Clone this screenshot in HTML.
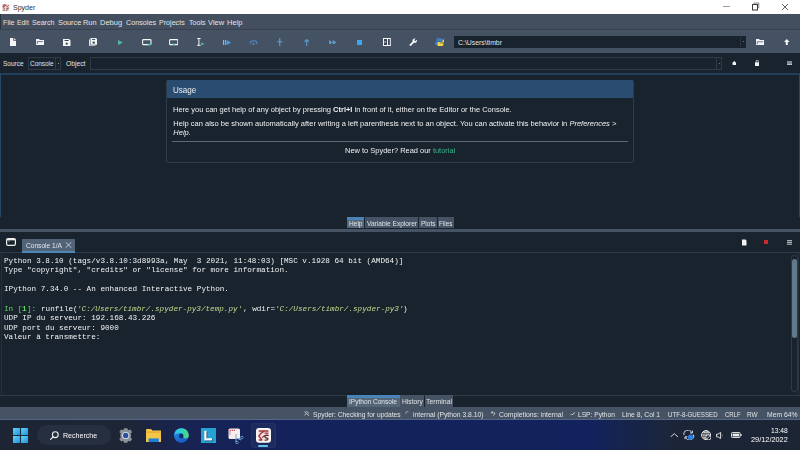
<!DOCTYPE html>
<html><head><meta charset="utf-8">
<style>
*{margin:0;padding:0;box-sizing:border-box}
html,body{width:800px;height:450px;overflow:hidden;background:#19232D;font-family:"Liberation Sans",sans-serif;position:relative}
.a{position:absolute}
.t{position:absolute;white-space:pre;line-height:1}

</style></head><body><div id="root" style="position:absolute;left:0;top:0;width:800px;height:450px;overflow:hidden;filter:blur(0.3px)">
<div class="a" style="left:0px;top:0px;width:800px;height:14px;background:#ffffff;"></div>
<svg class="a" style="left:2px;top:3.5px" width="7.6" height="7" viewBox="0 0 7.6 7">
<rect x="0" y="0" width="7.6" height="7" fill="#f0dcdc"/>
<path d="M0.8 1.2 L3.4 0.6 M0.6 2.4 L4.6 1.2 M3.2 2 L1 3.6 L3 5.2 M0.8 6.2 L2.8 6.4 M4.4 3.2 L6.8 1.4 M4.2 5 L6.4 3.6" stroke="#8f3434" stroke-width="0.8" fill="none"/>
<path d="M6.8 4.4 Q4.6 4.6 5 5.6 Q5.6 6.6 3.8 6.6" stroke="#5a4040" stroke-width="0.7" fill="none"/>
</svg>
<div class="t" style="left:13px;top:3.50px;font-family:'Liberation Sans', sans-serif;font-size:8.0px;color:#303030;font-weight:normal;font-style:normal;transform:scaleX(0.8794);transform-origin:0 0;">Spyder</div>
<div class="a" style="left:723px;top:6px;width:7px;height:1px;background:#9a9a9a;"></div>
<svg class="a" style="left:751px;top:2px" width="9" height="9" viewBox="0 0 9 9">
<rect x="1.5" y="2.5" width="5" height="5.5" fill="none" stroke="#3a3a3a" stroke-width="1"/>
<path d="M3 2 V1 H7.8 V5.8 H7" fill="none" stroke="#6a6a6a" stroke-width="0.8"/></svg>
<svg class="a" style="left:781px;top:3px" width="8" height="8" viewBox="0 0 8 8">
<path d="M1 1 L7 7 M7 1 L1 7" stroke="#444" stroke-width="0.8"/></svg>
<div class="a" style="left:0px;top:14px;width:800px;height:16px;background:#434e5f;"></div>
<div class="a" style="left:0px;top:14px;width:1px;height:16px;background:#2a3340;"></div>
<div class="a" style="left:0px;top:29px;width:800px;height:1px;background:#37414F;"></div>
<div class="t" style="left:2.6px;top:19.17px;font-family:'Liberation Sans', sans-serif;font-size:7.8px;color:#e2e4e7;font-weight:normal;font-style:normal;transform:scaleX(0.9222);transform-origin:0 0;">File</div>
<div class="t" style="left:16.8px;top:19.17px;font-family:'Liberation Sans', sans-serif;font-size:7.8px;color:#e2e4e7;font-weight:normal;font-style:normal;transform:scaleX(0.8781);transform-origin:0 0;">Edit</div>
<div class="t" style="left:32.4px;top:19.17px;font-family:'Liberation Sans', sans-serif;font-size:7.8px;color:#e2e4e7;font-weight:normal;font-style:normal;transform:scaleX(0.9062);transform-origin:0 0;">Search</div>
<div class="t" style="left:57.6px;top:19.17px;font-family:'Liberation Sans', sans-serif;font-size:7.8px;color:#e2e4e7;font-weight:normal;font-style:normal;transform:scaleX(0.9426);transform-origin:0 0;">Source</div>
<div class="t" style="left:83.39999999999999px;top:19.17px;font-family:'Liberation Sans', sans-serif;font-size:7.8px;color:#e2e4e7;font-weight:normal;font-style:normal;transform:scaleX(0.9432);transform-origin:0 0;">Run</div>
<div class="t" style="left:99.8px;top:19.17px;font-family:'Liberation Sans', sans-serif;font-size:7.8px;color:#e2e4e7;font-weight:normal;font-style:normal;transform:scaleX(0.9615);transform-origin:0 0;">Debug</div>
<div class="t" style="left:125.8px;top:19.17px;font-family:'Liberation Sans', sans-serif;font-size:7.8px;color:#e2e4e7;font-weight:normal;font-style:normal;transform:scaleX(0.9226);transform-origin:0 0;">Consoles</div>
<div class="t" style="left:159.4px;top:19.17px;font-family:'Liberation Sans', sans-serif;font-size:7.8px;color:#e2e4e7;font-weight:normal;font-style:normal;transform:scaleX(0.9123);transform-origin:0 0;">Projects</div>
<div class="t" style="left:188.7px;top:19.17px;font-family:'Liberation Sans', sans-serif;font-size:7.8px;color:#e2e4e7;font-weight:normal;font-style:normal;transform:scaleX(0.9119);transform-origin:0 0;">Tools</div>
<div class="t" style="left:208.2px;top:19.17px;font-family:'Liberation Sans', sans-serif;font-size:7.8px;color:#e2e4e7;font-weight:normal;font-style:normal;transform:scaleX(0.9663);transform-origin:0 0;">View</div>
<div class="t" style="left:227.2px;top:19.17px;font-family:'Liberation Sans', sans-serif;font-size:7.8px;color:#e2e4e7;font-weight:normal;font-style:normal;transform:scaleX(0.9659);transform-origin:0 0;">Help</div>
<div class="a" style="left:0px;top:30px;width:800px;height:23px;background:#455264;"></div>
<div class="a" style="left:454px;top:36px;width:292px;height:12px;background:#19232D;"></div>
<div class="a" style="left:740px;top:37px;width:1px;height:10px;background:#2a3541;"></div>
<div class="a" style="left:743px;top:41px;width:1.2px;height:1.2px;background:#6a7683;"></div>
<div class="t" style="left:457.5px;top:39.17px;font-family:'Liberation Sans', sans-serif;font-size:7.8px;color:#e2e4e7;font-weight:normal;font-style:normal;transform:scaleX(0.8830);transform-origin:0 0;">C:\Users\timbr</div>
<div class="a" style="left:0px;top:53px;width:800px;height:20px;background:#19232D;"></div>
<div class="t" style="left:2.5px;top:60.47px;font-family:'Liberation Sans', sans-serif;font-size:7.8px;color:#e2e4e7;font-weight:normal;font-style:normal;transform:scaleX(0.8293);transform-origin:0 0;">Source</div>
<div class="a" style="left:28px;top:57px;width:33px;height:13px;background:transparent;border:1px solid #2f3a46"></div>
<div class="a" style="left:55px;top:58px;width:1px;height:11px;background:#2f3a46;"></div>
<div class="a" style="left:57.5px;top:63px;width:1px;height:1px;background:#8899aa;"></div>
<div class="t" style="left:29.8px;top:60.47px;font-family:'Liberation Sans', sans-serif;font-size:7.8px;color:#e2e4e7;font-weight:normal;font-style:normal;transform:scaleX(0.8214);transform-origin:0 0;">Console</div>
<div class="t" style="left:65.8px;top:60.47px;font-family:'Liberation Sans', sans-serif;font-size:7.8px;color:#e2e4e7;font-weight:normal;font-style:normal;transform:scaleX(0.8649);transform-origin:0 0;">Object</div>
<div class="a" style="left:90px;top:57px;width:632px;height:13px;background:transparent;border:1px solid #2f3a46"></div>
<div class="a" style="left:716px;top:58px;width:1px;height:11px;background:#2f3a46;"></div>
<div class="a" style="left:718.5px;top:63px;width:1px;height:1px;background:#6a7683;"></div>
<div class="a" style="left:0px;top:73px;width:800px;height:145px;background:transparent;border:1px solid #294866;border-top:2px solid #223f5c;border-bottom:1px solid #37414F"></div>
<div class="a" style="left:166px;top:80px;width:468px;height:83px;background:transparent;border:1px solid #2e3d4a;border-radius:2px"></div>
<div class="a" style="left:167px;top:80px;width:466px;height:18px;background:#294c70;"></div>
<div class="t" style="left:173.3px;top:85.79px;font-family:'Liberation Sans', sans-serif;font-size:8.6px;color:#eceef0;font-weight:normal;font-style:normal;transform:scaleX(0.9379);transform-origin:0 0;">Usage</div>
<div class="t" style="left:173.3px;top:105.62px;font-family:'Liberation Sans', sans-serif;font-size:7.5px;color:#eef0f2;font-weight:normal;font-style:normal;transform:scaleX(0.9974);transform-origin:0 0;">Here you can get help of any object by pressing <b>Ctrl+I</b> in front of it, either on the Editor or the Console.</div>
<div class="t" style="left:173.3px;top:120.03px;font-family:'Liberation Sans', sans-serif;font-size:7.5px;color:#eef0f2;font-weight:normal;font-style:normal;transform:scaleX(1.0000);transform-origin:0 0;">Help can also be shown automatically after writing a left parenthesis next to an object. You can activate this behavior in <i>Preferences &gt;</i></div>
<div class="t" style="left:173.3px;top:129.03px;font-family:'Liberation Sans', sans-serif;font-size:7.5px;color:#eef0f2;font-weight:normal;font-style:italic;">Help.</div>
<div class="a" style="left:172px;top:141px;width:456px;height:1px;background:#5b6a78;"></div>
<div class="t" style="left:344.8px;top:147.38px;font-family:'Liberation Sans', sans-serif;font-size:7.5px;color:#eef0f2;font-weight:normal;font-style:normal;transform:scaleX(0.9945);transform-origin:0 0;">New to Spyder? Read our <span style="color:#38b58b">tutorial</span></div>
<div class="a" style="left:0px;top:217px;width:800px;height:11px;background:#19232D;"></div>
<div class="a" style="left:347px;top:217px;width:17.30000000000001px;height:11px;background:#54687A;"></div>
<div class="a" style="left:347px;top:217px;width:17.30000000000001px;height:2.5px;background:#4a83ba;"></div>
<div class="t" style="left:348.9px;top:219.71px;font-family:'Liberation Sans', sans-serif;font-size:7.4px;color:#e2e4e7;font-weight:normal;font-style:normal;transform:scaleX(0.8880);transform-origin:0 0;">Help</div>
<div class="a" style="left:365.4px;top:217px;width:52.60000000000002px;height:11px;background:#455364;"></div>
<div class="t" style="left:366.5px;top:219.71px;font-family:'Liberation Sans', sans-serif;font-size:7.4px;color:#e2e4e7;font-weight:normal;font-style:normal;transform:scaleX(0.8906);transform-origin:0 0;">Variable Explorer</div>
<div class="a" style="left:419px;top:217px;width:17.69999999999999px;height:11px;background:#455364;"></div>
<div class="t" style="left:420.5px;top:219.71px;font-family:'Liberation Sans', sans-serif;font-size:7.4px;color:#e2e4e7;font-weight:normal;font-style:normal;transform:scaleX(0.8821);transform-origin:0 0;">Plots</div>
<div class="a" style="left:437.8px;top:217px;width:16.19999999999999px;height:11px;background:#455364;"></div>
<div class="t" style="left:439.3px;top:219.71px;font-family:'Liberation Sans', sans-serif;font-size:7.4px;color:#e2e4e7;font-weight:normal;font-style:normal;transform:scaleX(0.8649);transform-origin:0 0;">Files</div>
<div class="a" style="left:0px;top:229px;width:800px;height:3px;background:#455364;"></div>
<div class="a" style="left:0px;top:232px;width:800px;height:21px;background:#19232D;"></div>
<div class="a" style="left:0px;top:252px;width:800px;height:1px;background:#2c3946;"></div>
<svg class="a" style="left:6px;top:238px" width="10" height="8" viewBox="0 0 10 8">
<rect x="0.6" y="0.6" width="8.8" height="6.8" rx="1.4" fill="none" stroke="#eeeeee" stroke-width="1.2"/>
<rect x="1" y="1" width="8" height="1.3" fill="#eeeeee"/><rect x="1.8" y="2.6" width="2" height="0.9" fill="#9aa0a8"/></svg>
<div class="a" style="left:22px;top:238.5px;width:53px;height:14.5px;background:#516377;"></div>
<div class="a" style="left:22px;top:250.5px;width:53px;height:2.5px;background:#4f86b8;"></div>
<div class="t" style="left:26px;top:241.51px;font-family:'Liberation Sans', sans-serif;font-size:7.4px;color:#e2e4e7;font-weight:normal;font-style:normal;transform:scaleX(0.8941);transform-origin:0 0;">Console 1/A</div>
<svg class="a" style="left:65px;top:242px" width="7" height="6" viewBox="0 0 7 6">
<path d="M0.6 0.2 L6.4 5.8 M6.4 0.2 L0.6 5.8" stroke="#dfe1e3" stroke-width="0.8"/></svg>
<svg class="a" style="left:741px;top:239px" width="6" height="7" viewBox="0 0 6 7">
<path d="M1 0.5 H4.5 L5.5 1.8 V6.5 H1 Z" fill="#f2f2f2"/></svg>
<div class="a" style="left:764px;top:240px;width:4.3px;height:4.3px;background:#c62c2c;"></div>
<svg class="a" style="left:787px;top:239.5px" width="5" height="5" viewBox="0 0 5 5"><rect y="0" width="5" height="1.2" fill="#a9afb5"/><rect y="1.8" width="5" height="1.2" fill="#a9afb5"/><rect y="3.6" width="5" height="1.2" fill="#a9afb5"/></svg>
<div class="t" style="left:4.0px;top:257.79px;font-family:'Liberation Mono', monospace;font-size:7.65px;color:#f2f3f4;font-weight:normal;font-style:normal;transform:scaleX(1.0011);transform-origin:0 0;">Python 3.8.10 (tags/v3.8.10:3d8993a, May  3 2021, 11:48:03) [MSC v.1928 64 bit (AMD64)]</div>
<div class="t" style="left:4.0px;top:267.35px;font-family:'Liberation Mono', monospace;font-size:7.65px;color:#f2f3f4;font-weight:normal;font-style:normal;transform:scaleX(1.0011);transform-origin:0 0;">Type &quot;copyright&quot;, &quot;credits&quot; or &quot;license&quot; for more information.</div>
<div class="t" style="left:4.0px;top:286.47px;font-family:'Liberation Mono', monospace;font-size:7.65px;color:#f2f3f4;font-weight:normal;font-style:normal;transform:scaleX(1.0011);transform-origin:0 0;">IPython 7.34.0 -- An enhanced Interactive Python.</div>
<div class="t" style="left:4.0px;top:305.59px;font-family:'Liberation Mono', monospace;font-size:7.65px;color:#62d662;font-weight:normal;font-style:normal;transform:scaleX(1.0009);transform-origin:0 0;">In [</div>
<div class="t" style="left:22.36px;top:305.59px;font-family:'Liberation Mono', monospace;font-size:7.65px;color:#62d662;font-weight:bold;font-style:normal;transform:scaleX(0.9992);transform-origin:0 0;">1</div>
<div class="t" style="left:26.95px;top:305.59px;font-family:'Liberation Mono', monospace;font-size:7.65px;color:#62d662;font-weight:normal;font-style:normal;transform:scaleX(1.0003);transform-origin:0 0;">]: </div>
<div class="t" style="left:40.72px;top:305.59px;font-family:'Liberation Mono', monospace;font-size:7.65px;color:#f2f3f4;font-weight:normal;font-style:normal;transform:scaleX(1.0009);transform-origin:0 0;">runfile(</div>
<div class="t" style="left:77.44px;top:305.59px;font-family:'Liberation Mono', monospace;font-size:7.65px;color:#bddc90;font-weight:normal;font-style:italic;transform:scaleX(1.0010);transform-origin:0 0;">&#x27;C:/Users/timbr/.spyder-py3/temp.py&#x27;</div>
<div class="t" style="left:242.68px;top:305.59px;font-family:'Liberation Mono', monospace;font-size:7.65px;color:#f2f3f4;font-weight:normal;font-style:normal;transform:scaleX(1.0006);transform-origin:0 0;">, wdir=</div>
<div class="t" style="left:274.81px;top:305.59px;font-family:'Liberation Mono', monospace;font-size:7.65px;color:#bddc90;font-weight:normal;font-style:italic;transform:scaleX(1.0010);transform-origin:0 0;">&#x27;C:/Users/timbr/.spyder-py3&#x27;</div>
<div class="t" style="left:403.33px;top:305.59px;font-family:'Liberation Mono', monospace;font-size:7.65px;color:#f2f3f4;font-weight:normal;font-style:normal;transform:scaleX(0.9992);transform-origin:0 0;">)</div>
<div class="t" style="left:4.0px;top:315.15px;font-family:'Liberation Mono', monospace;font-size:7.65px;color:#f2f3f4;font-weight:normal;font-style:normal;transform:scaleX(1.0010);transform-origin:0 0;">UDP IP du serveur: 192.168.43.226</div>
<div class="t" style="left:4.0px;top:324.71px;font-family:'Liberation Mono', monospace;font-size:7.65px;color:#f2f3f4;font-weight:normal;font-style:normal;transform:scaleX(1.0010);transform-origin:0 0;">UDP port du serveur: 9000</div>
<div class="t" style="left:4.0px;top:334.27px;font-family:'Liberation Mono', monospace;font-size:7.65px;color:#f2f3f4;font-weight:normal;font-style:normal;transform:scaleX(1.0010);transform-origin:0 0;">Valeur à transmettre:</div>
<div class="a" style="left:1px;top:253px;width:798px;height:143px;background:transparent;border:1px solid #26313c;border-top:none"></div>
<div class="a" style="left:791px;top:255px;width:7px;height:137px;background:#19232D;border:1px solid #2e3a47;border-radius:3px"></div>
<div class="a" style="left:792px;top:259px;width:5px;height:79px;background:#60798B;border-radius:2.5px"></div>
<div class="a" style="left:0px;top:395px;width:800px;height:1px;background:#2c3946;"></div>
<div class="a" style="left:347px;top:395.4px;width:52.5px;height:11.600000000000023px;background:#54687A;"></div>
<div class="a" style="left:347px;top:395.4px;width:52.5px;height:2.5px;background:#4a83ba;"></div>
<div class="t" style="left:348.9px;top:398.11px;font-family:'Liberation Sans', sans-serif;font-size:7.4px;color:#e2e4e7;font-weight:normal;font-style:normal;transform:scaleX(0.8850);transform-origin:0 0;">IPython Console</div>
<div class="a" style="left:400.3px;top:395.4px;width:23.5px;height:11.600000000000023px;background:#455364;"></div>
<div class="t" style="left:401.6px;top:398.11px;font-family:'Liberation Sans', sans-serif;font-size:7.4px;color:#e2e4e7;font-weight:normal;font-style:normal;transform:scaleX(0.9130);transform-origin:0 0;">History</div>
<div class="a" style="left:424.6px;top:395.4px;width:28.899999999999977px;height:11.600000000000023px;background:#455364;"></div>
<div class="t" style="left:426px;top:398.11px;font-family:'Liberation Sans', sans-serif;font-size:7.4px;color:#e2e4e7;font-weight:normal;font-style:normal;transform:scaleX(0.9306);transform-origin:0 0;">Terminal</div>
<div class="a" style="left:0px;top:407px;width:800px;height:13px;background:#455364;"></div>
<div class="a" style="left:0px;top:419px;width:800px;height:1px;background:#56668a;"></div>
<div class="t" style="left:312.7px;top:410.81px;font-family:'Liberation Sans', sans-serif;font-size:7.4px;color:#e2e4e7;font-weight:normal;font-style:normal;transform:scaleX(0.8996);transform-origin:0 0;">Spyder: Checking for updates</div>
<div class="t" style="left:413.45px;top:410.81px;font-family:'Liberation Sans', sans-serif;font-size:7.4px;color:#e2e4e7;font-weight:normal;font-style:normal;transform:scaleX(0.9189);transform-origin:0 0;">internal (Python 3.8.10)</div>
<div class="t" style="left:499.2px;top:410.81px;font-family:'Liberation Sans', sans-serif;font-size:7.4px;color:#e2e4e7;font-weight:normal;font-style:normal;transform:scaleX(0.9231);transform-origin:0 0;">Completions: internal</div>
<div class="t" style="left:578.45px;top:410.81px;font-family:'Liberation Sans', sans-serif;font-size:7.4px;color:#e2e4e7;font-weight:normal;font-style:normal;transform:scaleX(0.8967);transform-origin:0 0;">LSP: Python</div>
<div class="t" style="left:621.7px;top:410.81px;font-family:'Liberation Sans', sans-serif;font-size:7.4px;color:#e2e4e7;font-weight:normal;font-style:normal;transform:scaleX(0.9181);transform-origin:0 0;">Line 8, Col 1</div>
<div class="t" style="left:667.7px;top:410.81px;font-family:'Liberation Sans', sans-serif;font-size:7.4px;color:#e2e4e7;font-weight:normal;font-style:normal;transform:scaleX(0.8330);transform-origin:0 0;">UTF-8-GUESSED</div>
<div class="t" style="left:724.7px;top:410.81px;font-family:'Liberation Sans', sans-serif;font-size:7.4px;color:#e2e4e7;font-weight:normal;font-style:normal;transform:scaleX(0.8078);transform-origin:0 0;">CRLF</div>
<div class="t" style="left:746.7px;top:410.81px;font-family:'Liberation Sans', sans-serif;font-size:7.4px;color:#e2e4e7;font-weight:normal;font-style:normal;transform:scaleX(0.8697);transform-origin:0 0;">RW</div>
<div class="t" style="left:766.7px;top:410.81px;font-family:'Liberation Sans', sans-serif;font-size:7.4px;color:#e2e4e7;font-weight:normal;font-style:normal;transform:scaleX(0.9194);transform-origin:0 0;">Mem 64%</div>
<div class="a" style="left:0px;top:420px;width:800px;height:30px;background:linear-gradient(90deg,#1d2534 0%,#1d2536 16%,#182352 23%,#13225b 33%,#12225c 74%,#172449 79%,#1c2538 84%,#1c2534 100%);"></div>
<svg class="a" style="left:10px;top:38px" width="6" height="8" viewBox="0 0 6 8"><path d="M0 0 H4 L6 2 V8 H0 Z" fill="#f4f5f6"/><path d="M3.6 0 V2.4 H6" fill="none" stroke="#3a4555" stroke-width="0.8"/></svg>
<svg class="a" style="left:36px;top:39px" width="8" height="6" viewBox="0 0 8 6"><path d="M0 0 H3 L4 1 H8 V6 H0 Z" fill="#f4f5f6"/><path d="M1.2 2.6 H7 M1.2 2.6 V5" stroke="#3a4555" stroke-width="0.7" fill="none"/></svg>
<svg class="a" style="left:63px;top:38.5px" width="7.5" height="7" viewBox="0 0 7.5 7"><path d="M0 0 H6 L7.5 1.5 V7 H0 Z" fill="#f4f5f6"/><rect x="1.6" y="1" width="4" height="1" fill="#3a4555"/><path d="M3.75 3.4 V6 M2.5 4.7 H5" stroke="#3a4555" stroke-width="0.9"/></svg>
<svg class="a" style="left:89px;top:38px" width="8" height="8.3" viewBox="0 0 8 8.3"><path d="M1.5 0 H7 L8 1 V6.8 H1.5 Z" fill="#f4f5f6"/><path d="M0.5 1.5 V7.8 H6.5" fill="none" stroke="#f4f5f6" stroke-width="0.9"/><rect x="3" y="0.9" width="3.2" height="1" fill="#3a4555"/><rect x="3.6" y="3.6" width="2.2" height="2" fill="#3a4555"/></svg>
<svg class="a" style="left:118px;top:39.5px" width="5" height="5.2" viewBox="0 0 5 5.2"><path d="M0 0 L4.8 2.6 L0 5.2 Z" fill="#52b7a2"/></svg>
<svg class="a" style="left:142px;top:39px" width="10" height="7.2" viewBox="0 0 10 7.2"><rect x="0.6" y="0.6" width="8.4" height="5" rx="0.8" fill="none" stroke="#f4f5f6" stroke-width="1.1"/><path d="M5.8 4.2 L9.6 5.6 L5.8 7.2 Z" fill="#52b7a2"/></svg>
<svg class="a" style="left:169px;top:38.8px" width="9.4" height="7" viewBox="0 0 9.4 7"><rect x="0.6" y="0.6" width="8.2" height="5" rx="0.6" fill="none" stroke="#f4f5f6" stroke-width="1.1"/><path d="M3.2 4.4 H6.4 L4.8 6.8 Z" fill="#52b7a2"/></svg>
<svg class="a" style="left:196.5px;top:38px" width="8" height="8" viewBox="0 0 8 8"><path d="M0.2 0.5 H3.6 M1.9 0.5 V7.3 M0.2 7.3 H3.6" stroke="#f4f5f6" stroke-width="1"/><path d="M4.2 4.2 L7.6 5.9 L4.2 7.6 Z" fill="#52b7a2"/></svg>
<svg class="a" style="left:222.6px;top:39.5px" width="8.2" height="5.2" viewBox="0 0 8.2 5.2"><rect x="0" y="0" width="1.2" height="5.2" fill="#86bde9"/><rect x="2" y="0" width="1.2" height="5.2" fill="#6aaee3"/><path d="M3.6 0 L8.2 2.6 L3.6 5.2 Z" fill="#4b9be0"/></svg>
<svg class="a" style="left:248.7px;top:39.8px" width="9" height="5" viewBox="0 0 9 5"><path d="M1 4 A3.5 3.2 0 0 1 8 4" fill="none" stroke="#4a8cc8" stroke-width="1.1"/><circle cx="4.5" cy="3.9" r="1" fill="#5596d0"/></svg>
<svg class="a" style="left:275.8px;top:38.2px" width="7.5" height="8" viewBox="0 0 7.5 8"><path d="M3.75 0 V8 M1 3.8 H6.5" stroke="#5f9ccc" stroke-width="1.1"/></svg>
<svg class="a" style="left:304px;top:38.6px" width="5.4" height="7.2" viewBox="0 0 5.4 7.2"><path d="M2.7 0.6 V7.2 M0.4 2.8 L2.7 0.6 L5 2.8" fill="none" stroke="#5f9ccc" stroke-width="1.1"/></svg>
<svg class="a" style="left:328.9px;top:39.6px" width="7.5" height="4.8" viewBox="0 0 7.5 4.8"><path d="M0 0 L3.6 2.4 L0 4.8 Z M3.7 0 L7.5 2.4 L3.7 4.8 Z" fill="#5f9ccc"/></svg>
<svg class="a" style="left:356.8px;top:39.7px" width="5.4" height="5.1" viewBox="0 0 5.4 5.1"><rect width="5.4" height="5.1" fill="#3aa8f0"/></svg>
<svg class="a" style="left:383px;top:38px" width="7.8" height="8" viewBox="0 0 7.8 8"><rect x="0" y="0" width="7.8" height="8" fill="#f4f5f6"/><rect x="1" y="1" width="3" height="6" fill="#3a4555"/><rect x="5" y="1" width="1.8" height="6" fill="#3a4555"/><rect x="1.6" y="3.2" width="1" height="1.6" fill="#f4f5f6"/></svg>
<svg class="a" style="left:409px;top:38px" width="8.4" height="8.2" viewBox="0 0 8.4 8.2"><g transform="translate(8.4 0) scale(-0.35 0.35)"><path d="M22.7 19l-9.1-9.1c.9-2.3.4-5-1.5-6.9-2-2-5-2.4-7.4-1.3L9 6 6 9 1.6 4.7C.4 7.1.9 10.1 2.9 12.1c1.9 1.9 4.6 2.4 6.9 1.5l9.1 9.1c.4.4 1 .4 1.4 0l2.3-2.3c.5-.4.5-1.1.1-1.4z" fill="#f4f5f6"/></g></svg>
<svg class="a" style="left:434.5px;top:37.6px" width="9.6" height="8.6" viewBox="0 0 9.6 8.6"><path d="M4.8 0 C2.5 0 1.2 0.6 1.2 2 V3.4 H4.8 V4 H0.8 C0.2 4 0 4.6 0 5.4 C0 6.6 0.5 7 1.2 7 H2 V5.6 C2 4.9 2.6 4.6 3.4 4.6 H6 C6.8 4.6 7.2 4.1 7.2 3.4 V1.6 C7.2 0.6 6.2 0 4.8 0 Z" fill="#3d7cc6"/><path d="M4.8 8.6 C7.1 8.6 8.4 8 8.4 6.6 V5.2 H4.8 V4.6 H8.8 C9.4 4.6 9.6 4 9.6 3.2 C9.6 2 9.1 1.6 8.4 1.6 H7.6 V3 C7.6 3.7 7 4 6.2 4 H3.6 C2.8 4 2.4 4.5 2.4 5.2 V7 C2.4 8 3.4 8.6 4.8 8.6 Z" fill="#f2d548"/></svg>
<svg class="a" style="left:755.8px;top:39px" width="8.4" height="6.4" viewBox="0 0 8.4 6.4"><path d="M0 0 H3 L4 1 H8.2 V6.4 H0 Z" fill="#f4f5f6"/><path d="M1.2 2.8 H7.2 M1.2 2.8 V5.2" stroke="#3a4555" stroke-width="0.7" fill="none"/></svg>
<svg class="a" style="left:784px;top:38.7px" width="5.6" height="6.4" viewBox="0 0 5.6 6.4"><path d="M2.8 0 L5.6 3 H3.8 V6.4 H1.8 V3 H0 Z" fill="#f4f5f6"/></svg>
<svg class="a" style="left:731.8px;top:61.2px" width="4.6" height="4.2" viewBox="0 0 4.6 4.2"><path d="M2.3 0 L4.6 2.2 H4 V4.2 H0.6 V2.2 H0 Z" fill="#f4f5f6"/></svg>
<svg class="a" style="left:754.7px;top:60px" width="4.6" height="6" viewBox="0 0 4.6 6"><path d="M1.2 2.4 V1.3 A1.1 1.1 0 0 1 3.4 1.3 V2.4" fill="none" stroke="#f4f5f6" stroke-width="0.8"/><rect x="0" y="2.3" width="4.6" height="3.7" fill="#f4f5f6"/></svg>
<svg class="a" style="left:786.6px;top:61px" width="5.2" height="4.2" viewBox="0 0 5.2 4.2"><rect width="5.2" height="4.2" fill="#7f8a96"/><rect y="3.2" width="5.2" height="1" fill="#c9cdd0"/></svg>
<svg class="a" style="left:13px;top:428px" width="15.2" height="15" viewBox="0 0 15.2 15"><defs><linearGradient id="wg" x1="0" y1="0" x2="1" y2="1"><stop offset="0" stop-color="#5fd8fa"/><stop offset="1" stop-color="#1f8fdc"/></linearGradient></defs><rect x="0" y="0" width="7.1" height="7" fill="url(#wg)"/><rect x="8.1" y="0" width="7.1" height="7" fill="url(#wg)"/><rect x="0" y="8" width="7.1" height="7" fill="url(#wg)"/><rect x="8.1" y="8" width="7.1" height="7" fill="url(#wg)"/></svg>
<div class="a" style="left:37px;top:425px;width:74px;height:20px;border-radius:10px;background:#262f3f"></div>
<svg class="a" style="left:50px;top:430.5px" width="9" height="9" viewBox="0 0 9 9"><circle cx="5.3" cy="3.7" r="2.9" fill="none" stroke="#f0f0f0" stroke-width="1.1"/><path d="M3.2 5.8 L0.6 8.4" stroke="#f0f0f0" stroke-width="1.2" stroke-linecap="round"/></svg>
<svg class="a" style="left:118px;top:428px" width="15.4" height="15" viewBox="0 0 15.4 15"><g transform="translate(7.7 7.5)"><path d="M-1.6 -7.3 H1.6 L2.3 -5.2 L4.6 -6.1 L6.4 -3.4 L4.8 -1.8 L5.6 0 L4.8 1.8 L6.4 3.4 L4.6 6.1 L2.3 5.2 L1.6 7.3 H-1.6 L-2.3 5.2 L-4.6 6.1 L-6.4 3.4 L-4.8 1.8 L-5.6 0 L-4.8 -1.8 L-6.4 -3.4 L-4.6 -6.1 L-2.3 -5.2 Z" fill="#8d9299"/><circle r="3.6" fill="#dfe8f5"/><circle r="2.7" fill="#2a4f9c"/></g></svg>
<svg class="a" style="left:145.6px;top:428.7px" width="15.4" height="13.6" viewBox="0 0 15.4 13.6"><path d="M0 1 Q0 0 1 0 H5 L6.4 1.4 H14.4 Q15.4 1.4 15.4 2.4 V12.6 Q15.4 13.6 14.4 13.6 H1 Q0 13.6 0 12.6 Z" fill="#f3c64a"/><rect x="0" y="2.6" width="15.4" height="1" fill="#e0a52c"/><rect x="2.6" y="9.4" width="10.2" height="4.2" fill="#1f7fd6"/></svg>
<svg class="a" style="left:173.5px;top:428px" width="15" height="15.2" viewBox="0 0 15 15.2"><defs><linearGradient id="eg1" x1="0" y1="0" x2="1" y2="0"><stop offset="0" stop-color="#2cc6e6"/><stop offset="0.55" stop-color="#32d0c8"/><stop offset="1" stop-color="#5ad65c"/></linearGradient><linearGradient id="eg2" x1="0" y1="0" x2="0.4" y2="1"><stop offset="0" stop-color="#2a9ef0"/><stop offset="1" stop-color="#1b58c0"/></linearGradient></defs><circle cx="7.4" cy="7.6" r="7.4" fill="url(#eg2)"/><path d="M0.4 6.4 Q1.6 0.2 7.4 0.2 Q13.6 0.2 14.8 7 Q14.8 10.4 11.6 10.4 Q9.2 10.4 9.4 8 Q9.4 5.2 6.2 5.2 Q2.8 5.2 0.4 6.4 Z" fill="url(#eg1)"/><ellipse cx="7.2" cy="7.9" rx="2.2" ry="2.3" fill="#10306a"/></svg>
<svg class="a" style="left:200.5px;top:428px" width="15.5" height="15" viewBox="0 0 15.5 15"><rect width="15.5" height="15" fill="#23a2d3"/><path d="M4.4 2.8 V11.4 H11" fill="none" stroke="#0a3d58" stroke-width="2.4" transform="translate(0.6 0.6)"/><path d="M4.4 2.8 V11.4 H11" fill="none" stroke="#ffffff" stroke-width="2.2"/></svg>
<svg class="a" style="left:227.5px;top:427.5px" width="17" height="16" viewBox="0 0 17 16"><rect x="0.5" y="0.5" width="11.5" height="10.5" rx="1.6" fill="#f4eeee"/><path d="M2 2.4 H7 M2 2.4 V7" stroke="#c4434a" stroke-width="1.2" stroke-dasharray="1.2 0.8"/><path d="M8 6 V14 M8 10 L13 12" stroke="#7aa8d8" stroke-width="1" fill="none"/><circle cx="13.8" cy="9.6" r="1.3" fill="none" stroke="#7aa8d8" stroke-width="0.8"/><circle cx="9" cy="14.4" r="1.3" fill="none" stroke="#7aa8d8" stroke-width="0.8"/></svg>
<div class="a" style="left:251px;top:423px;width:24.5px;height:25px;border-radius:3px;background:#1d2a5c;border:1px solid #24326a"></div>
<svg class="a" style="left:255.9px;top:427.9px" width="15" height="14.8" viewBox="0 0 15 14.8"><rect x="0" y="0" width="15" height="14.8" rx="3" fill="#faf6f6"/><rect x="2.3" y="2.1" width="10.6" height="10.3" fill="#f1dede"/><path d="M2.8 3 H12.4 M4 6 L8.2 3.2 M8.6 5.2 H12.4 M5.6 4.6 L2.8 8 L5.8 11.6 M2.8 12 H6.4 M6.2 9.6 L9 7.4" stroke="#a53838" stroke-width="1.3" fill="none"/><path d="M12.6 7.4 Q8.6 6.8 8.8 8.8 Q9.2 10 11.6 10.4 Q12.8 12.2 8.6 12.2" stroke="#4f3434" stroke-width="1.3" fill="none"/></svg>
<div class="a" style="left:258px;top:445.3px;width:10px;height:2px;border-radius:1px;background:#62c6ea"></div>
<svg class="a" style="left:669.5px;top:432.5px" width="8.6" height="4.6" viewBox="0 0 8.6 4.6"><path d="M0.5 4.1 L4.3 0.6 L8.1 4.1" fill="none" stroke="#e8e8e8" stroke-width="0.9"/></svg>
<svg class="a" style="left:683.2px;top:430.2px" width="11.4" height="9.8" viewBox="0 0 11.4 9.8"><path d="M1 5 A4 4 0 0 1 8.6 2.6 M10.4 4.6 A4 4 0 0 1 2.8 7.2" fill="none" stroke="#ececec" stroke-width="0.9"/><path d="M9.4 0.6 V3 H7" fill="none" stroke="#ececec" stroke-width="0.9"/><path d="M2 9.2 V6.8 H4.4" fill="none" stroke="#ececec" stroke-width="0.9"/><circle cx="7.6" cy="7.2" r="2.6" fill="#2d7fe0"/></svg>
<svg class="a" style="left:700.8px;top:430.3px" width="10.6" height="10.2" viewBox="0 0 10.6 10.2"><circle cx="5.1" cy="5.1" r="4.5" fill="none" stroke="#ececec" stroke-width="1"/><path d="M0.6 5.1 H9.6 M5.1 0.6 V9.6 M2.2 2.4 H8 M2.2 7.8 H8" stroke="#ececec" stroke-width="0.7"/><ellipse cx="5.1" cy="5.1" rx="2.2" ry="4.5" fill="none" stroke="#ececec" stroke-width="0.7"/><circle cx="7.4" cy="7.4" r="2.6" fill="#1c2538" stroke="#ececec" stroke-width="0.9"/><path d="M5.8 9 L9 5.8" stroke="#ececec" stroke-width="0.8"/><circle cx="2.4" cy="7.8" r="0.9" fill="#e09a4a"/></svg>
<svg class="a" style="left:716px;top:431.8px" width="8" height="7" viewBox="0 0 8 7"><path d="M0.5 2.2 H2 L4.6 0.4 V6.6 L2 4.8 H0.5 Z" fill="none" stroke="#ececec" stroke-width="0.9"/><path d="M6 2 Q7 3.5 6 5" fill="none" stroke="#7a808a" stroke-width="0.6"/></svg>
<svg class="a" style="left:731.2px;top:432.3px" width="10.6" height="6" viewBox="0 0 10.6 6"><rect x="0.5" y="0.5" width="8.6" height="5" rx="0.8" fill="none" stroke="#ececec" stroke-width="0.9"/><rect x="1.6" y="1.6" width="6.4" height="2.8" fill="#ececec"/><rect x="9.4" y="2" width="1.2" height="2" fill="#ececec"/></svg>
<svg class="a" style="left:303.7px;top:411px" width="5.4" height="5" viewBox="0 0 5.4 5"><path d="M0.4 0.6 L2.4 2.4 L0.4 4.4 M2.2 0.4 L5 2.4 M2.6 3 L5 4.6" stroke="#c9cdd2" stroke-width="0.9" fill="none"/></svg>
<svg class="a" style="left:404.5px;top:410.8px" width="4" height="3" viewBox="0 0 4 3"><path d="M0.6 2.6 A1.8 1.8 0 0 1 3.4 1" stroke="#c9cdd2" stroke-width="0.8" fill="none"/></svg>
<svg class="a" style="left:490.6px;top:411.3px" width="5.6" height="5" viewBox="0 0 5.6 5"><circle cx="1.2" cy="1.4" r="1" fill="#d5d8db"/><path d="M2.6 1.2 Q4.6 2 3.6 3.2 L2.2 4.4" stroke="#d5d8db" stroke-width="0.9" fill="none"/></svg>
<svg class="a" style="left:570px;top:411.8px" width="5.2" height="3.6" viewBox="0 0 5.2 3.6"><path d="M0.5 2.4 L1.8 3.2 L4.8 0.6" stroke="#dfe2e5" stroke-width="0.9" fill="none"/></svg>
<div class="t" style="left:63px;top:432.14px;font-family:'Liberation Sans', sans-serif;font-size:7.6px;color:#ffffff;font-weight:normal;font-style:normal;transform:scaleX(0.9310);transform-origin:0 0;">Recherche</div>
<div class="t" style="left:771px;top:427.11px;font-family:'Liberation Sans', sans-serif;font-size:7.4px;color:#ffffff;font-weight:normal;font-style:normal;transform:scaleX(0.9081);transform-origin:0 0;">13:48</div>
<div class="t" style="left:751px;top:436.21px;font-family:'Liberation Sans', sans-serif;font-size:7.4px;color:#ffffff;font-weight:normal;font-style:normal;transform:scaleX(0.9946);transform-origin:0 0;">29/12/2022</div>
</div></body></html>
